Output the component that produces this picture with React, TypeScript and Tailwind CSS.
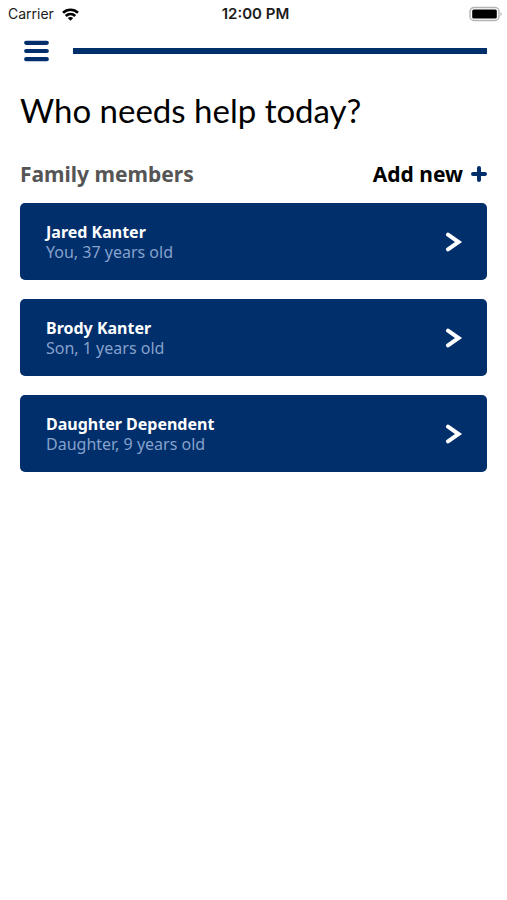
import React from 'react';

interface Member {
  id: number;
  name: string;
  detail: string;
}

const members: Member[] = [
  { id: 1, name: 'Jared Kanter', detail: 'You, 37 years old' },
  { id: 2, name: 'Brody Kanter', detail: 'Son, 1 years old' },
  { id: 3, name: 'Daughter Dependent', detail: 'Daughter, 9 years old' },
];

const StatusBar: React.FC = () => (
  <div className="grid grid-cols-3 items-center h-7 pl-2 pr-1 font-['Inter',sans-serif] text-sm text-[#1c1c1c]">
    <div className="flex items-center gap-2">
      <span>Carrier</span>
      <svg width="17" height="13" viewBox="0 0 17 13" fill="none" stroke="#000" strokeWidth="2.6" aria-hidden="true">
        <path d="M1 4.8C5.2 0.7 11.8 0.7 16 4.8" />
        <path d="M3.8 8C6.4 5.4 10.6 5.4 13.2 8" />
        <path d="M8.5 12.8L5.8 10C7.4 8.7 9.6 8.7 11.2 10Z" fill="#000" stroke="none" />
      </svg>
    </div>
    <span className="text-center text-[15px] font-semibold">12:00 PM</span>
    <svg className="justify-self-end" width="34" height="16" viewBox="0 0 34 16" aria-hidden="true">
      <rect x="1" y="1.5" width="29" height="13" rx="4" fill="#fff" stroke="#b4b4b4" strokeWidth="1.4" />
      <rect x="3.2" y="3.6" width="24.6" height="9" rx="1.5" fill="#000" />
      <path d="M31.6 6.2C33 6.8 33 9.4 31.6 10Z" fill="#999" />
    </svg>
  </div>
);

const MemberCard: React.FC<{ member: Member }> = ({ member }) => (
  <button className="flex w-full items-center justify-between rounded-[5px] bg-[#002f6c] h-[77px] pl-[26px] pr-6 text-left">
    <span className="flex flex-col text-base leading-5">
      <span className="font-bold text-white">{member.name}</span>
      <span className="text-[#86a1cb]">{member.detail}</span>
    </span>
    <svg width="18" height="20" viewBox="0 0 18 20" fill="none" stroke="#fff" strokeWidth="4" strokeLinecap="round" aria-hidden="true">
      <path d="M3 2.6L13.6 10L3 17.4" strokeLinejoin="miter" />
    </svg>
  </button>
);

const App: React.FC = () => (
  <div className="min-h-screen bg-white font-['Noto_Sans',sans-serif] text-black">
    <StatusBar />

    <header className="flex items-center gap-6 h-[46px] pl-6 pr-5">
      <button aria-label="Menu">
        <svg width="25" height="22" viewBox="0 0 25 22" stroke="#002f6c" strokeWidth="4.2" strokeLinecap="round" aria-hidden="true">
          <path d="M2.2 2.8H22.8M2.2 11H22.8M2.2 19.2H22.8" />
        </svg>
      </button>
      <div className="h-[6px] flex-1 bg-[#002f6c]" />
    </header>

    <main className="px-5">
      <h1 className="pt-4 font-['Lato',sans-serif] text-[33px] leading-10">Who needs help today?</h1>

      <div className="flex items-center justify-between pt-7 pb-[13px]">
        <h2 className="text-[21px] leading-8 font-bold text-[#555]">Family members</h2>
        <button className="flex items-center gap-2 text-[21px] leading-8 font-bold">
          Add new
          <svg width="16" height="16" viewBox="0 0 16 16" stroke="#002f6c" strokeWidth="4" strokeLinecap="round" aria-hidden="true">
            <path d="M8 2V14M2 8H14" />
          </svg>
        </button>
      </div>

      <div className="flex flex-col gap-[19px]">
        {members.map((member) => (
          <MemberCard key={member.id} member={member} />
        ))}
      </div>
    </main>
  </div>
);

export default App;
